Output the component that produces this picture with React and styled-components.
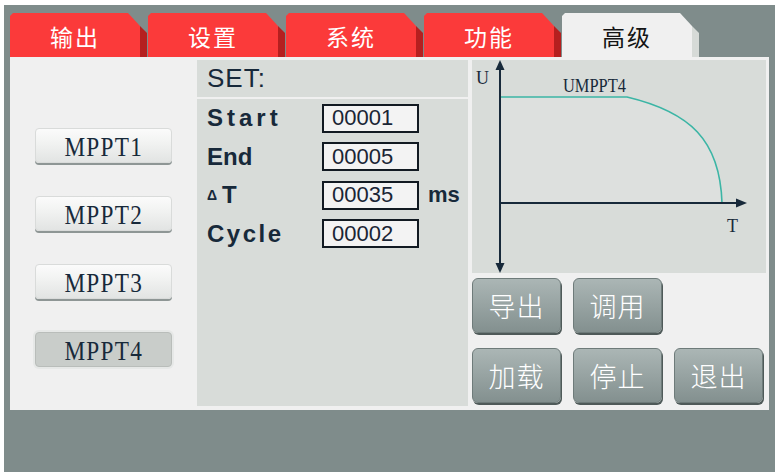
import React from 'react'
import styled, { createGlobalStyle } from 'styled-components'

const tabs = ['输出', '设置', '系统', '功能', '高级']
const modes = ['MPPT1', 'MPPT2', 'MPPT3', 'MPPT4']
const params = [
  { label: 'Start', value: '00001', spacing: 4 },
  { label: 'End', value: '00005', spacing: 0 },
  { label: 'T', delta: true, value: '00035', unit: 'ms', spacing: 0 },
  { label: 'Cycle', value: '00002', spacing: 2.5 },
]
const actions = [['导出', '调用'], ['加载', '停止', '退出']]

const GlobalStyle = createGlobalStyle`
  body {
    margin: 0;
    background: #fff;
  }
`

function Chart() {
  return (
    <ChartSvg width="294" height="213" viewBox="0 0 294 213">
      <path d="M28 37 L155 37 C218 52 248 80 250 143 L28 143 Z" fill="#dde0de" />
      <path d="M28 37 L155 37 C218 52 248 80 250 143" fill="none" stroke="#3bb5a5" strokeWidth="1.6" />
      <line x1="28" y1="8" x2="28" y2="205" stroke="#17293a" strokeWidth="2" />
      <line x1="28" y1="143" x2="266" y2="143" stroke="#17293a" strokeWidth="2" />
      <polygon points="28,0 23.5,10 32.5,10" fill="#17293a" />
      <polygon points="28,213 23.5,203 32.5,203" fill="#17293a" />
      <polygon points="275,143 264,138.5 264,147.5" fill="#17293a" />
      <text x="4" y="24" textLength="13" lengthAdjust="spacingAndGlyphs">U</text>
      <text x="255" y="172" textLength="11" lengthAdjust="spacingAndGlyphs">T</text>
      <text x="91" y="32" textLength="63" lengthAdjust="spacingAndGlyphs">UMPPT4</text>
    </ChartSvg>
  )
}

export default function App() {
  return (
    <>
      <GlobalStyle />
      <Screen>
        <TabBar>
          {tabs.map((t, i) => (
            <TabItem key={t}>
              <TabFace active={i === tabs.length - 1}>{t}</TabFace>
              <TabShadow active={i === tabs.length - 1} />
            </TabItem>
          ))}
        </TabBar>
        <Panel>
          <ModeColumn>
            {modes.map(m => (
              <ModeButton key={m} selected={m === 'MPPT4'}>
                <ModeText>{m}</ModeText>
              </ModeButton>
            ))}
          </ModeColumn>
          <SetPanel>
            <SetHeader>SET:</SetHeader>
            <SetBody>
              {params.map(p => (
                <ParamRow key={p.label}>
                  <ParamLabel spacing={p.spacing}>
                    {p.delta && <Delta>Δ</Delta>}
                    {p.label}
                  </ParamLabel>
                  <ValueBox>{p.value}</ValueBox>
                  {p.unit && <Unit>{p.unit}</Unit>}
                </ParamRow>
              ))}
            </SetBody>
          </SetPanel>
          <RightColumn>
            <Chart />
            <ActionGrid>
              {actions.map((row, r) =>
                row.map(a => (
                  <ActionButton key={a} style={r === 1 ? { gridRow: 2 } : undefined}>
                    {a}
                  </ActionButton>
                ))
              )}
            </ActionGrid>
          </RightColumn>
        </Panel>
      </Screen>
    </>
  )
}

const Screen = styled.div`
  margin: 5px 0 0 4px;
  width: 771px;
  height: 467px;
  background: #7f8c8b;
  padding: 8px 0 0 6px;
  box-sizing: border-box;
`

const TabBar = styled.div`
  display: flex;
  height: 44px;
`

const TabItem = styled.div`
  display: flex;
  margin-right: 1px;
`

const TabFace = styled.div`
  width: 130px;
  display: flex;
  align-items: center;
  justify-content: center;
  padding-top: 1px;
  box-sizing: border-box;
  background: ${p => (p.active ? '#f0f0f0' : '#fb3a3a')};
  color: ${p => (p.active ? '#141414' : '#fff')};
  font-family: 'Noto Sans CJK SC', sans-serif;
  font-size: 23px;
  letter-spacing: 2px;
  clip-path: polygon(0 3px, 3px 0, 118px 0, 130px 13px, 130px 100%, 0 100%);
`

const TabShadow = styled.div`
  width: 7px;
  background: ${p => (p.active ? '#d6dad7' : '#b51f1f')};
  clip-path: polygon(0 13px, 100% 20px, 100% 100%, 0 100%);
`

const Panel = styled.div`
  display: flex;
  width: 759px;
  height: 353px;
  background: #f0f0f0;
  padding: 3px 0 4px 0;
  box-sizing: border-box;
`

const ModeColumn = styled.div`
  width: 187px;
  display: flex;
  flex-direction: column;
  gap: 33px;
  padding: 68px 0 0 25px;
  box-sizing: border-box;
`

const ModeButton = styled.div`
  width: 137px;
  height: 35px;
  box-sizing: border-box;
  display: flex;
  align-items: center;
  justify-content: center;
  padding-top: 3px;
  border-radius: 4px;
  border: 1px solid ${p => (p.selected ? '#b9bdba' : '#d9dbda')};
  background: ${p =>
    p.selected ? '#c9cdca' : 'linear-gradient(#fbfbfb 0%, #f2f3f2 40%, #e2e4e3 100%)'};
  box-shadow: ${p => (p.selected ? '0 0 0 2px #e6e8e7' : '0 2px 0 #8e9695')};
`

const ModeText = styled.span`
  display: inline-block;
  transform: scaleX(0.86);
  color: #17293a;
  font-family: 'Liberation Serif', serif;
  font-size: 27px;
  letter-spacing: 1.5px;
`

const SetPanel = styled.div`
  width: 271px;
  display: flex;
  flex-direction: column;
  gap: 2px;
`

const SetHeader = styled.div`
  height: 37px;
  background: #d8dcd9;
  padding-left: 10px;
  display: flex;
  align-items: center;
  color: #17293a;
  font-family: 'Liberation Sans', sans-serif;
  font-size: 26px;
  letter-spacing: 1px;
`

const SetBody = styled.div`
  flex: 1;
  background: #d8dcd9;
  padding: 0 0 0 10px;
`

const ParamRow = styled.div`
  display: grid;
  grid-template-columns: 115px 97px auto;
  align-items: center;
  height: 38.5px;
`

const ParamLabel = styled.div`
  color: #17293a;
  font-family: 'Liberation Sans', sans-serif;
  font-size: 24px;
  font-weight: bold;
  letter-spacing: ${p => p.spacing}px;
  display: flex;
  align-items: center;
`

const Delta = styled.span`
  font-size: 14px;
  font-weight: bold;
  margin-right: 5px;
  letter-spacing: 0;
`

const ValueBox = styled.div`
  height: 29px;
  box-sizing: border-box;
  border: 2px solid #121a22;
  background: #f3f3f3;
  padding-left: 8px;
  display: flex;
  align-items: center;
  color: #1a2535;
  font-family: 'Liberation Sans', sans-serif;
  font-size: 22px;
`

const Unit = styled.div`
  margin-left: 9px;
  color: #17293a;
  font-family: 'Liberation Sans', sans-serif;
  font-size: 22px;
  font-weight: bold;
`

const RightColumn = styled.div`
  width: 294px;
  margin-left: 4px;
  display: flex;
  flex-direction: column;
  gap: 5px;
`

const ChartSvg = styled.svg`
  display: block;
  background: #d8dcd9;
  font-family: 'Liberation Serif', serif;
  font-size: 19px;
  fill: #17293a;
`

const ActionGrid = styled.div`
  display: grid;
  grid-template-columns: repeat(3, 89px);
  grid-auto-rows: 55px;
  column-gap: 12px;
  row-gap: 15px;
`

const ActionButton = styled.div`
  border-radius: 6px;
  border: 1px solid #6e7b7a;
  background: linear-gradient(#abb6b5 0%, #97a3a2 50%, #83908f 100%);
  box-shadow: 1px 2px 0 #4f5a59;
  display: flex;
  align-items: center;
  justify-content: center;
  color: #fff;
  font-family: 'Noto Sans CJK SC', sans-serif;
  font-size: 27px;
  font-weight: 300;
  letter-spacing: 1px;
`
